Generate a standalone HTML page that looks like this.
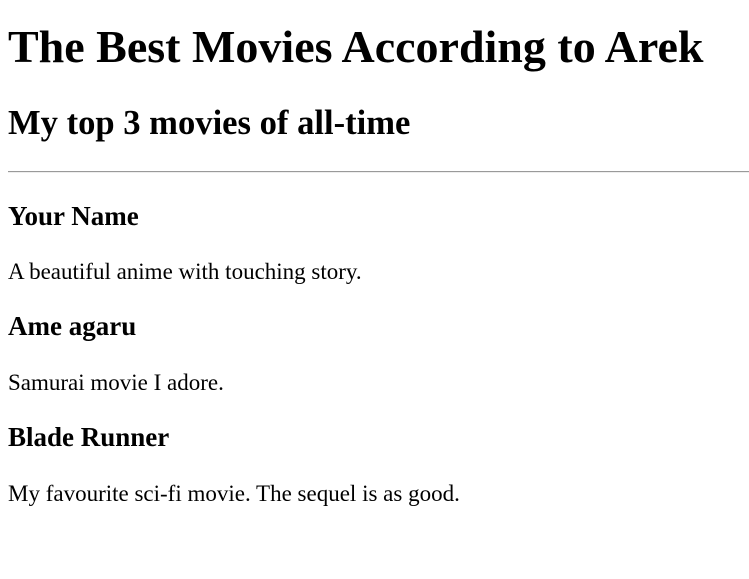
<!DOCTYPE html>
<html><head><meta charset="utf-8"><style>
html,body{margin:0;padding:0;background:#fff;width:749px;height:579px;overflow:hidden}
body{font-family:"Liberation Serif","Times New Roman",serif;color:#000;position:relative}
.a{position:absolute;left:8px;margin:0;white-space:nowrap}
h1{font-size:46px;line-height:46px;font-weight:bold}
h2{font-size:34.6px;line-height:34.6px;font-weight:bold}
h3{font-size:27px;line-height:27px;font-weight:bold}
p{font-size:23px;line-height:23px}
hr{position:absolute;left:8px;top:171px;width:741px;margin:0;border:0;border-top:1px solid #9a9a9a;border-bottom:1px solid #eee;height:0}
</style></head><body>
<h1 class="a" style="top:23.5px">The Best Movies According to Arek</h1>
<h2 class="a" style="top:106px">My top 3 movies of all-time</h2>
<hr>
<h3 class="a" style="top:203.4px">Your Name</h3>
<p class="a" style="top:259.7px">A beautiful anime with touching story.</p>
<h3 class="a" style="top:313.4px">Ame agaru</h3>
<p class="a" style="top:370.7px">Samurai movie I adore.</p>
<h3 class="a" style="top:424.4px">Blade Runner</h3>
<p class="a" style="top:481.7px">My favourite sci-fi movie. The sequel is as good.</p>
</body></html>
